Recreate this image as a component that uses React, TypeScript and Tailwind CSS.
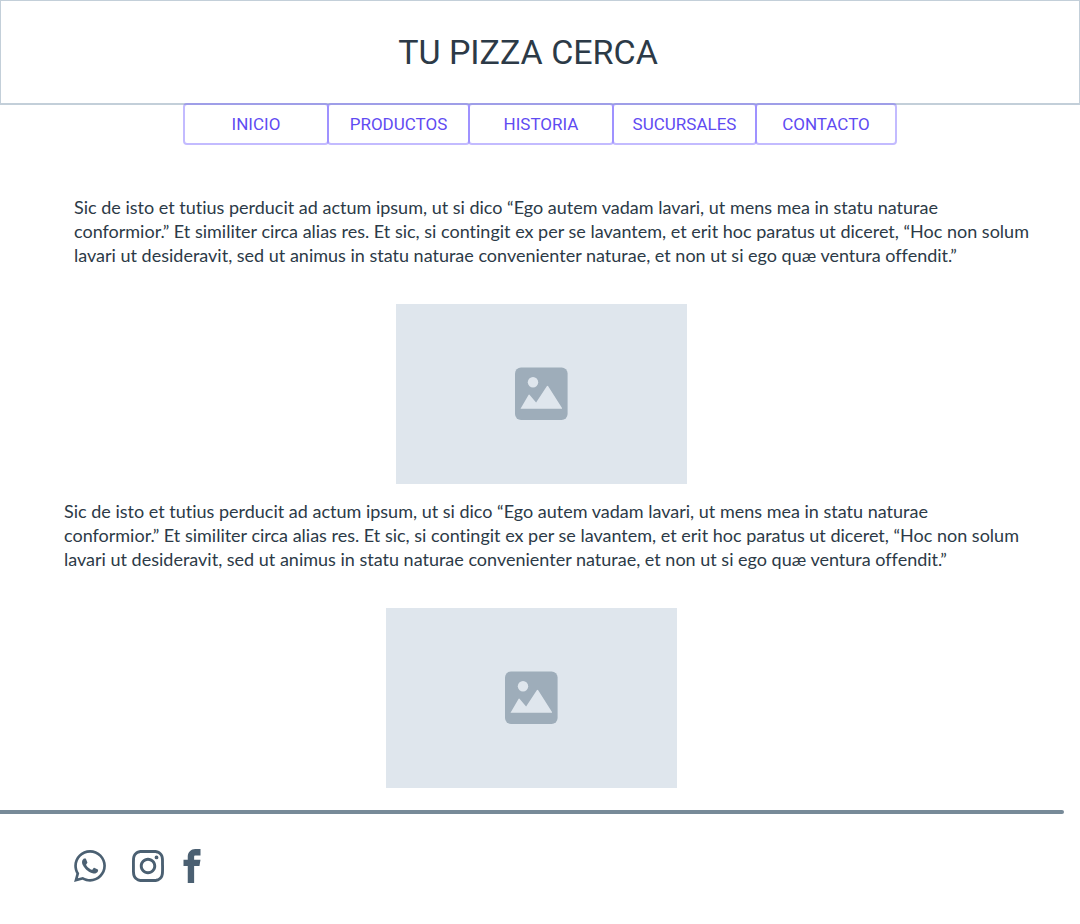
import { ImFacebook, ImWhatsapp } from "react-icons/im";
import { SiInstagram } from "react-icons/si";

const LINKS = [
  { label: "INICIO", width: "w-[146px]" },
  { label: "PRODUCTOS", width: "w-[143px]" },
  { label: "HISTORIA", width: "w-[146px]" },
  { label: "SUCURSALES", width: "w-[145px]" },
  { label: "CONTACTO", width: "w-[142px]" },
];

const TEXT =
  "Sic de isto et tutius perducit ad actum ipsum, ut si dico “Ego autem vadam lavari, ut mens mea in statu naturae conformior.” Et similiter circa alias res. Et sic, si contingit ex per se lavantem, et erit hoc paratus ut diceret, “Hoc non solum lavari ut desideravit, sed ut animus in statu naturae convenienter naturae, et non ut si ego quæ ventura offendit.”";

function ImagePlaceholder() {
  return (
    <div
      role="img"
      aria-label="Imagen"
      className="mx-auto mt-[37px] flex h-[180px] w-[291px] items-center justify-center bg-[#dfe6ed]"
    >
      <svg width="54" height="54" viewBox="0 0 54 54" aria-hidden="true">
        <rect y="0.5" width="52.6" height="52.6" rx="6" fill="#9eadba" />
        <circle cx="18" cy="15.3" r="5.2" fill="#dfe6ed" />
        <path
          d="M5.5 41.8 13.5 27.9Q14 27.1 14.5 27.8L21.1 35.6 31.8 19.2Q32.5 18.3 33.2 19.2L47 40.9Q47.4 41.8 46.5 41.8Z"
          fill="#dfe6ed"
        />
      </svg>
    </div>
  );
}

function Article({ className }: { className: string }) {
  return (
    <article className={className}>
      <p className="pr-9 pl-16 font-[Lato,sans-serif] text-[18px] leading-6 [font-variant-ligatures:none]">
        {TEXT}
      </p>
      <ImagePlaceholder />
    </article>
  );
}

export default function App() {
  return (
    <div className="bg-white font-[Roboto,sans-serif] text-[#2c3a47]">
      <header className="border border-b-2 border-[#c3cfd9] pt-7 pr-6 pb-[27px] text-center">
        <h1 className="text-[34px] leading-[47px]">TU PIZZA CERCA</h1>
      </header>

      <nav aria-label="Principal" className="relative -mt-0.5 flex justify-center">
        {LINKS.map(({ label, width }) => (
          <a
            key={label}
            href={`#${label.toLowerCase()}`}
            className={`${width} -ml-0.5 flex h-[42px] items-center justify-center rounded-[4px] border-2 border-[#6a55ff]/40 pt-0.5 text-[17px] text-[#5f4bf2] first:ml-0`}
          >
            {label}
          </a>
        ))}
      </nav>

      <main>
        <Article className="mt-[50px] pr-[7px] pl-[10px]" />
        <Article className="mt-[15px] pr-[17px]" />
      </main>

      <footer className="mt-[22px]">
        <hr className="mr-4 h-1 rounded-r-full border-0 bg-[#778a98]" />
        <div className="mt-[35px] flex items-center pb-10 pl-[74px] text-[#4b6072]">
          <a href="#whatsapp" aria-label="WhatsApp" className="mr-[26px]">
            <ImWhatsapp size={32} />
          </a>
          <a href="#instagram" aria-label="Instagram" className="mr-[11px]">
            <SiInstagram size={32} />
          </a>
          <a href="#facebook" aria-label="Facebook">
            <ImFacebook size={34} />
          </a>
        </div>
      </footer>
    </div>
  );
}
